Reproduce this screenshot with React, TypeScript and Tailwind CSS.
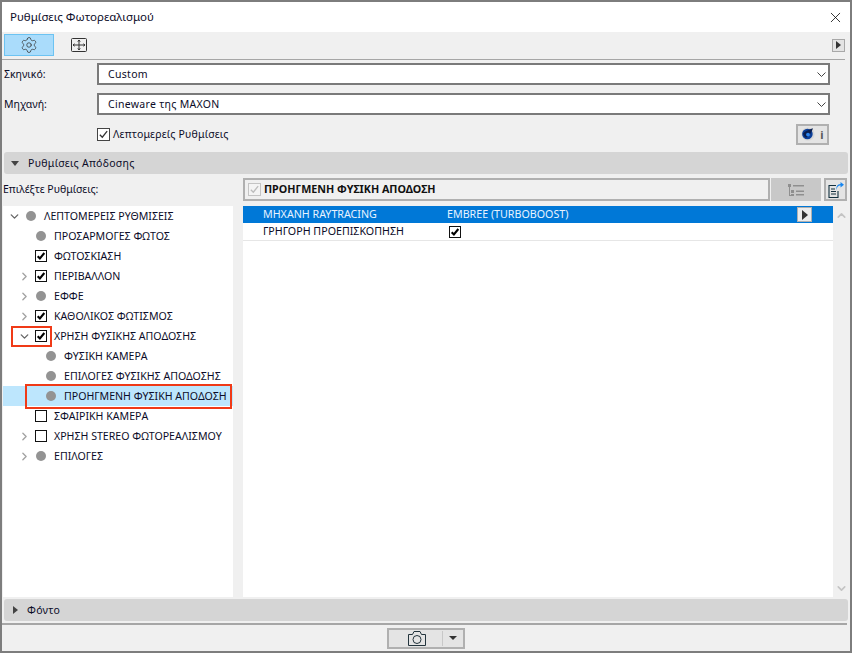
import React from "react";
import { ChevronDown, ChevronRight, ChevronUp, Settings, X } from "lucide-react";

const CheckMark = ({ className, weight = 2 }: { className?: string; weight?: number }) => (
  <svg viewBox="0 0 12 12" className={className} fill="none" stroke="currentColor" strokeWidth={weight}>
    <path d="M2 6.2 4.7 9 10 2.4" />
  </svg>
);

const TreeBox = ({ checked }: { checked: boolean }) => (
  <span className="flex h-[12px] w-[12px] items-center justify-center border border-[#111] bg-white text-black">
    {checked && <CheckMark className="h-[10px] w-[10px]" weight={2.5} />}
  </span>
);

type TreeItem = {
  label: string;
  indent: "pl-0" | "pl-[10px]" | "pl-[20px]";
  arrow?: "open" | "closed";
  box?: "on" | "off";
  selected?: boolean;
};

const treeItems: TreeItem[] = [
  { label: "ΛΕΠΤΟΜΕΡΕΙΣ ΡΥΘΜΙΣΕΙΣ", indent: "pl-0", arrow: "open" },
  { label: "ΠΡΟΣΑΡΜΟΓΕΣ ΦΩΤΟΣ", indent: "pl-[10px]" },
  { label: "ΦΩΤΟΣΚΙΑΣΗ", indent: "pl-[10px]", box: "on" },
  { label: "ΠΕΡΙΒΑΛΛΟΝ", indent: "pl-[10px]", arrow: "closed", box: "on" },
  { label: "ΕΦΦΕ", indent: "pl-[10px]", arrow: "closed" },
  { label: "ΚΑΘΟΛΙΚΟΣ ΦΩΤΙΣΜΟΣ", indent: "pl-[10px]", arrow: "closed", box: "on" },
  { label: "ΧΡΗΣΗ ΦΥΣΙΚΗΣ ΑΠΟΔΟΣΗΣ", indent: "pl-[10px]", arrow: "open", box: "on" },
  { label: "ΦΥΣΙΚΗ ΚΑΜΕΡΑ", indent: "pl-[20px]" },
  { label: "ΕΠΙΛΟΓΕΣ ΦΥΣΙΚΗΣ ΑΠΟΔΟΣΗΣ", indent: "pl-[20px]" },
  { label: "ΠΡΟΗΓΜΕΝΗ ΦΥΣΙΚΗ ΑΠΟΔΟΣΗ", indent: "pl-[20px]", selected: true },
  { label: "ΣΦΑΙΡΙΚΗ ΚΑΜΕΡΑ", indent: "pl-[10px]", box: "off" },
  { label: "ΧΡΗΣΗ STEREO ΦΩΤΟΡΕΑΛΙΣΜΟΥ", indent: "pl-[10px]", arrow: "closed", box: "off" },
  { label: "ΕΠΙΛΟΓΕΣ", indent: "pl-[10px]", arrow: "closed" },
];

const TreeRow = ({ item }: { item: TreeItem }) => (
  <div className={`flex h-5 items-center whitespace-nowrap pl-[3px] ${item.selected ? "bg-[#bde6fd]" : ""}`}>
    <div className={`flex items-center ${item.indent}`}>
      <span className="flex w-4 justify-center">
        {item.arrow === "open" && <ChevronDown size={13} strokeWidth={2.5} className="text-[#666]" />}
        {item.arrow === "closed" && <ChevronRight size={13} strokeWidth={2.5} className="text-[#a3a3a3]" />}
      </span>
      <span className="flex w-[18px] justify-center">
        {item.box ? <TreeBox checked={item.box === "on"} /> : <span className="h-[10px] w-[10px] rounded-full bg-[#939393]" />}
      </span>
      <span className="ml-1 text-[10.6px] text-[#0c0c28]">{item.label}</span>
    </div>
  </div>
);

const SelectField = ({ value }: { value: string }) => (
  <div className="flex h-[22px] flex-1 items-center justify-between border-2 border-[#7a7a7a] bg-white pl-[9px] pr-[2px] text-[#0c0c28]">
    <span className="tracking-[0.3px]">{value}</span>
    <svg viewBox="0 0 9 5" className="h-[5px] w-[9px]" fill="none" stroke="#444" strokeWidth="1">
      <path d="M.5.5 4.5 4.5 8.5.5" />
    </svg>
  </div>
);

const SmallArrowButton = () => (
  <div className="flex h-[13px] w-[13px] items-center justify-center border border-[#a8a8a8] bg-[#e4e4e4]">
    <span className="h-0 w-0 border-y-[4px] border-l-[5px] border-y-transparent border-l-[#333]" />
  </div>
);

const SectionBar = ({ title, open }: { title: string; open: boolean }) => (
  <div className="mx-[2px] flex h-[22px] items-center rounded-[3px] bg-[#d5d5d5] pl-[7px]">
    {open ? (
      <span className="h-0 w-0 border-x-[4px] border-t-[5px] border-x-transparent border-t-[#444]" />
    ) : (
      <span className="ml-[2px] h-0 w-0 border-y-[4px] border-l-[5px] border-y-transparent border-l-[#444]" />
    )}
    <span className="ml-[9px] tracking-[0.3px] text-[#0c0c28]">{title}</span>
  </div>
);

export default function App() {
  return (
    <div className="flex h-[653px] w-[852px] flex-col overflow-hidden border-2 border-[#7d7d7d] bg-[#f0f0f0] font-['Noto_Sans','Open_Sans',sans-serif] text-[10.5px] leading-none">
      {/* title */}
      <div className="flex h-[30px] shrink-0 items-center justify-between bg-white pl-2 pr-[6px]">
        <span className="text-[11.5px] text-[#0c0c28]">Ρυθμίσεις Φωτορεαλισμού</span>
        <X size={17} strokeWidth={1.1} className="text-black" />
      </div>

      {/* toolbar */}
      <div className="mr-[5px] flex h-[28px] shrink-0 items-center justify-between border-b border-[#a6a6a6] pb-[3px] pl-[2px] pt-[2px]">
        <div className="flex items-center">
          <div className="flex h-[22px] w-[50px] items-center justify-center border border-[#6cc3f2] bg-[#aadcfb]">
            <Settings size={18} strokeWidth={1} className="text-[#333]" />
          </div>
          <svg viewBox="0 0 16 14" className="ml-[17px] h-[14px] w-[16px]" fill="none" stroke="#333" strokeWidth="1">
            <rect x="0.5" y="0.5" width="15" height="13" rx="1" />
            <path d="M8 2v10M2 7h12" />
            <path d="M6.8 3.6 8 2l1.2 1.6M6.8 10.4 8 12l1.2-1.6M3.6 5.8 2 7l1.6 1.2M12.4 5.8 14 7l-1.6 1.2" />
          </svg>
        </div>
        <SmallArrowButton />
      </div>

      {/* scene + engine */}
      <div className="flex shrink-0 flex-col gap-2 pr-[20px] pt-[3px]">
        <div className="flex items-center">
          <span className="w-[95px] pl-[2px] text-[#0c0c28]">Σκηνικό:</span>
          <SelectField value="Custom" />
        </div>
        <div className="flex items-center">
          <span className="w-[95px] pl-[2px] text-[#0c0c28]">Μηχανή:</span>
          <SelectField value="Cineware της MAXON" />
        </div>
      </div>

      {/* detail checkbox */}
      <div className="box-content flex h-[22px] shrink-0 items-center justify-between pl-[95px] pr-[21px] pt-[8px]">
        <div className="flex items-center">
          <span className="flex h-[13px] w-[13px] items-center justify-center border border-[#444] bg-white text-[#333]">
            <CheckMark className="h-[11px] w-[11px]" weight={1.4} />
          </span>
          <span className="ml-[3px] tracking-[0.2px] text-[#0c0c28]">Λεπτομερείς Ρυθμίσεις</span>
        </div>
        <div className="flex h-[21px] w-[33px] items-center justify-center gap-[5px] border-2 border-[#b0b0b0] bg-[#e4e4e4]">
          <svg viewBox="0 0 14 14" className="h-[14px] w-[14px]">
            <circle cx="7" cy="7" r="6.6" fill="#d6d6d6" />
            <circle cx="6.4" cy="7" r="5.3" fill="#0c3f99" />
            <path d="M2 6.5C4 4 8 2.6 12 1.2 10.5 5 9 8.5 5.5 10.5 3.6 10.5 2.6 8.5 2 6.5Z" fill="#0a1f50" />
            <circle cx="7" cy="7.6" r="1.9" fill="#2e86f0" />
          </svg>
          <span className="text-[11px] font-bold text-[#555]">i</span>
        </div>
      </div>

      <div className="mt-[7px] shrink-0">
        <SectionBar title="Ρυθμίσεις Απόδοσης" open />
      </div>

      {/* choose row */}
      <div className="mt-[4px] flex h-[23px] shrink-0 items-center justify-between pr-[3px]">
        <span className="pl-[1px] text-[#0c0c28]">Επιλέξτε Ρυθμίσεις:</span>
        <div className="flex h-full items-center">
          <div className="flex h-full w-[527px] items-center border-2 border-[#b0b0b0] pl-[3px]">
            <span className="flex h-[13px] w-[13px] items-center justify-center border border-[#c4c4c4] bg-[#f4f4f4] text-[#bcbcbc]">
              <CheckMark className="h-[11px] w-[11px]" weight={1.4} />
            </span>
            <span className="ml-[3px] text-[10.75px] font-bold text-[#111]">ΠΡΟΗΓΜΕΝΗ ΦΥΣΙΚΗ ΑΠΟΔΟΣΗ</span>
          </div>
          <div className="ml-[1px] flex h-full w-[50px] items-center justify-center bg-[#c8c8c8]">
            <svg viewBox="0 0 16 12" className="h-[12px] w-[16px]" fill="#8f8f8f">
              <path d="M0 0h3v3H0zM5 1h11v1.5H5zM3 6h3v3H3zM8 6.5h8V8H8zM3 10h3v2H3zM8 10h8v1.5H8z" />
              <path d="M1 3h1v8h1v1H1z" />
            </svg>
          </div>
          <div className="ml-[3px] flex h-full w-[23px] items-center justify-center border-2 border-[#b0b0b0] bg-[#e4e4e4]">
            <svg viewBox="0 0 16 16" className="h-[16px] w-[16px]" fill="none">
              <path d="M8 3.5H1v12h9V9" stroke="#12303f" strokeWidth="1.1" />
              <path d="M3 7h4M3 9.5h5M3 12h5" stroke="#12303f" />
              <path d="M8.5 8C8.8 5 10.5 3.5 12.5 3.3V5.5L16 2.7 12.5 0v2C9.5 2.2 8 4.5 8.5 8Z" fill="#1686f0" />
            </svg>
          </div>
        </div>
      </div>

      {/* main panels */}
      <div className="mt-[5px] flex min-h-0 flex-1">
        <div className="relative ml-[1px] w-[230px] shrink-0 bg-white">
          {treeItems.map((item) => (
            <TreeRow key={item.label} item={item} />
          ))}
          <div className="absolute left-[8px] top-[120px] h-[21px] w-[41px] border-2 border-[#f03a17]" />
          <div className="absolute left-[22px] top-[178px] h-[25px] w-[207px] border-2 border-[#f03a17]" />
        </div>
        <div className="ml-[10px] flex min-w-0 flex-1">
          <div className="flex-1 bg-white text-[10.7px]">
            <div className="flex h-[17px] items-center bg-[#0078d7] pl-5 text-[#e8f3ff]">
              <span className="w-[184px]">ΜΗΧΑΝΗ RAYTRACING</span>
              <span>EMBREE (TURBOBOOST)</span>
              <div className="ml-auto mr-[21px] flex h-[15px] w-[15px] items-center justify-center border border-[#b0b0b0] bg-[#ececec]">
                <span className="h-0 w-0 border-y-[5px] border-l-[6px] border-y-transparent border-l-[#333]" />
              </div>
            </div>
            <div className="flex h-[18px] items-center border-b border-[#e6e6e6] pl-5 text-[#0c0c28]">
              <span className="w-[184px]">ΓΡΗΓΟΡΗ ΠΡΟΕΠΙΣΚΟΠΗΣΗ</span>
              <span className="ml-[2px]">
                <TreeBox checked />
              </span>
            </div>
          </div>
          <div className="flex w-[17px] shrink-0 flex-col items-center justify-between pb-[2px] pt-[3px] text-[#c4c4c4]">
            <ChevronUp size={13} strokeWidth={3} />
            <ChevronDown size={13} strokeWidth={3} />
          </div>
        </div>
      </div>

      <div className="mt-[2px] shrink-0">
        <SectionBar title="Φόντο" open={false} />
      </div>

      {/* bottom bar */}
      <div className="mr-[3px] mt-[2px] flex h-[28px] shrink-0 items-center justify-center border-t-2 border-[#a6a6a6] pl-[3px]">
        <div className="flex h-[21px] w-[78px] items-center border-2 border-[#b0b0b0] bg-[#e4e4e4]">
          <div className="flex flex-1 justify-center pl-[2px]">
            <svg viewBox="0 0 18 15" className="h-[15px] w-[18px]" fill="none" stroke="#23343d" strokeWidth="1">
              <path d="M.5 3.5h4L6 .5h6l1.5 3h4v11H.5z" />
              <circle cx="9" cy="8.5" r="4" />
            </svg>
          </div>
          <div className="h-[15px] w-[1px] bg-[#c8c8c8]" />
          <div className="flex w-[20px] justify-center">
            <span className="h-0 w-0 border-x-[4px] border-t-[4px] border-x-transparent border-t-[#333]" />
          </div>
        </div>
      </div>
    </div>
  );
}
